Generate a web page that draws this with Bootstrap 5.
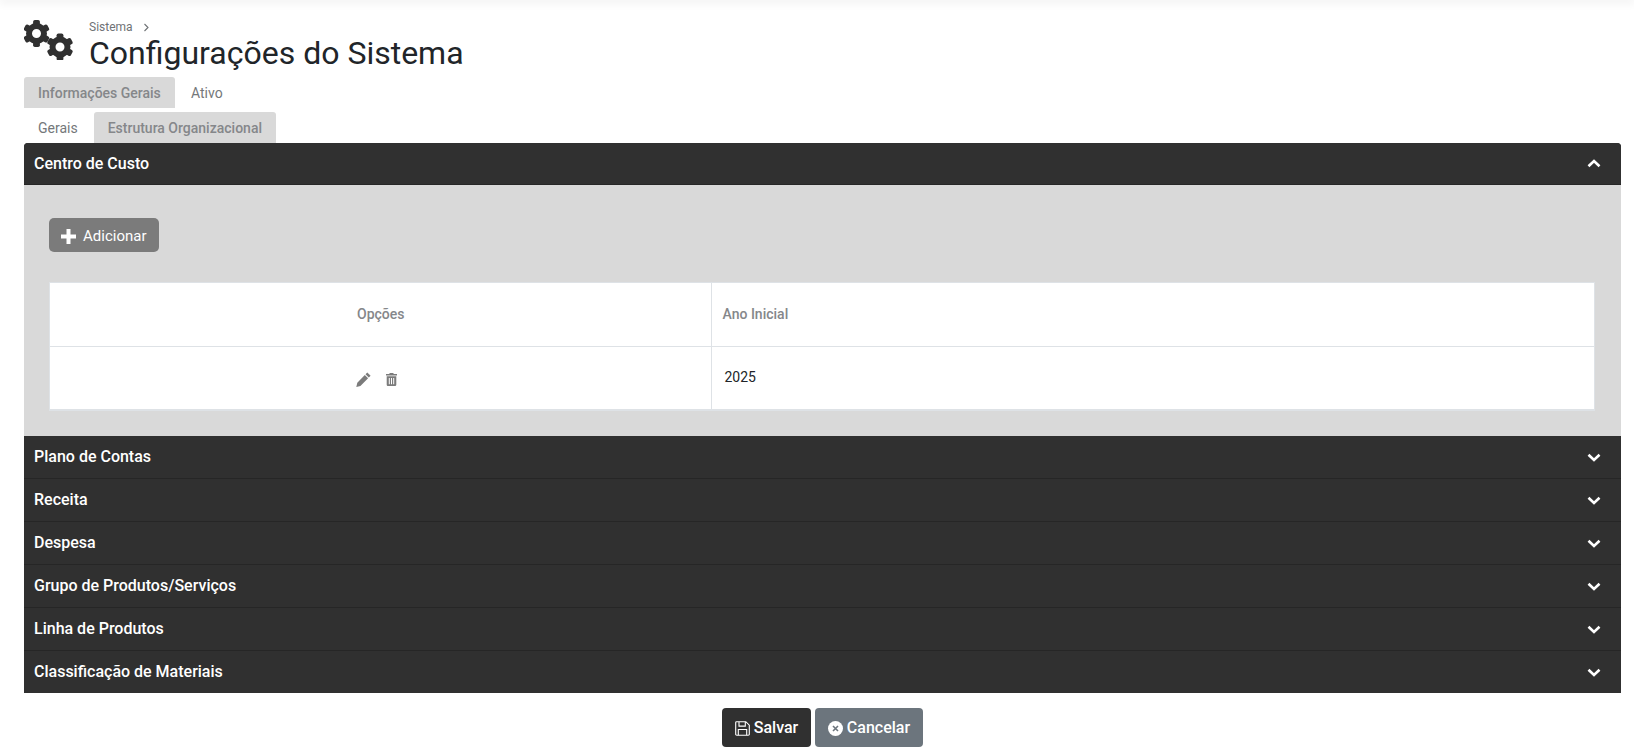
<!DOCTYPE html>
<html lang="pt-BR">
<head>
<meta charset="utf-8">
<title>Configurações do Sistema</title>
<link href="https://cdn.jsdelivr.net/npm/bootstrap@5.3.0/dist/css/bootstrap.min.css" rel="stylesheet">
<style>
html,body{height:100%;overflow:hidden}
body{font-family:Roboto,"Liberation Sans",sans-serif;background:#fff;color:#212529;font-size:14px}
.top-shade{height:0;box-shadow:0 0 10px 1px rgba(0,0,0,.2);margin-bottom:20px;background:#fff}
.page-wrap{padding:0 13px 0 24px}
.head-row{height:57px}
.gears{width:50px;height:40px;margin-right:15px;flex:none}
.crumb{font-size:12px;line-height:14px;color:#6f7275;height:14px}
.crumb svg{margin-left:7px;vertical-align:-1px}
.page-title{font-size:32px;font-weight:400;line-height:38px;margin:0;color:#212529}
.tabs-a,.tabs-b{border:0;flex-wrap:nowrap}
.tabs-a{height:31px;margin-bottom:4px}
.tabs-b{height:31px}
.tabs-a .nav-link,.tabs-b .nav-link{border:0;border-radius:3px 3px 0 0;padding:0 14px;height:31px;line-height:33px;font-size:14px;color:#74777a;margin:0;background:transparent;white-space:nowrap}
.tabs-a .nav-link:not(.active){padding-left:16px}
.tabs-a .nav-link.active,.tabs-b .nav-link.active{background:#d9d9d9;color:#85878a;font-weight:500}
.tabs-a .nav-link.active{width:151px}
.tabs-b .nav-link.active{width:182px;margin-left:2px}
.acc{--bs-accordion-border-width:0;--bs-accordion-border-radius:0}
.acc .accordion-item{background:#303030;border:0;border-radius:0}
.acc .accordion-item:first-child{border-radius:4px 4px 0 0}
.acc .accordion-item:first-child .accordion-button{border-radius:4px 4px 0 0;height:42px}
.acc .accordion-button{background:#303030;color:#fff;font-weight:500;font-size:16px;height:43px;padding:0 20px 0 10px;box-shadow:none;border-radius:0;border-bottom:1px solid #262626}
.acc .accordion-item:last-child .accordion-button{border-bottom:0;height:42px}
.acc .accordion-button::after{display:none}
.acc .accordion-button svg{margin-left:auto;flex:none}
.acc-body{background:#d9d9d9;height:251px;padding:33px 25px 0}
.btn-add{background:#7b7b7b;border:0;color:#fff;height:34px;width:110px;padding:3px 0 0 12px;display:flex;align-items:center;gap:7px;font-size:15px;border-radius:5px}
.btn-add:hover{background:#7b7b7b;color:#fff}
.tbl-wrap{margin-top:30px;width:1546px;border:1px solid #dee2e6;border-bottom-width:2px;background:#fff}
.tbl-wrap table{margin:0;table-layout:fixed;width:100%;--bs-table-bg:#fff}
.tbl-wrap th,.tbl-wrap td{height:63px;vertical-align:middle;font-size:14px;border-color:#dee2e6;padding:0 11px 0 12px}
.tbl-wrap th:not(.col-opt){padding-left:11px}
.tbl-wrap td{padding-left:13px}
.tbl-wrap th{color:#85878a;font-weight:500}
.tbl-wrap td{color:#212529;border-bottom:0;font-weight:400}
.tbl-wrap .col-opt{width:661px;text-align:center;border-right:1px solid #dee2e6}
.opt-icons{margin-right:9px;display:inline-flex;align-items:center;gap:15px;padding-top:10px}
.foot-row{margin-top:15px;gap:4px}
.foot-row .btn{height:39px;font-size:16px;font-weight:500;color:#fff;display:flex;align-items:center;border:0;padding:1px 0 0;border-radius:4px;justify-content:center;gap:4px}
.btn-save{width:89px;background:#303030}
.btn-save:hover{background:#303030}
.btn-cancel{width:108px;background:#6c757d}
.btn-cancel:hover{background:#6c757d}
</style>
</head>
<body>
<div class="top-shade"></div>
<div class="page-wrap">
  <div class="d-flex head-row">
    <svg class="gears" viewBox="0 0 50 40" aria-hidden="true">
      <defs>
        <g id="cog">
          <circle r="7.500" fill="none" stroke="#303030" stroke-width="6"/>
          <g fill="#303030">
            <rect x="-3.400" y="-13.500" width="6.800" height="5.500" rx="1.800"/>
            <rect x="-3.400" y="-13.500" width="6.800" height="5.500" rx="1.800" transform="rotate(60)"/>
            <rect x="-3.400" y="-13.500" width="6.800" height="5.500" rx="1.800" transform="rotate(120)"/>
            <rect x="-3.400" y="-13.500" width="6.800" height="5.500" rx="1.800" transform="rotate(180)"/>
            <rect x="-3.400" y="-13.500" width="6.800" height="5.500" rx="1.800" transform="rotate(240)"/>
            <rect x="-3.400" y="-13.500" width="6.800" height="5.500" rx="1.800" transform="rotate(300)"/>
          </g>
        </g>
      </defs>
      <use href="#cog" x="12.500" y="13.500"/>
      <use href="#cog" x="36" y="27"/>
    </svg>
    <div>
      <div class="crumb">Sistema <svg width="7" height="9" viewBox="0 0 7 9"><path d="M1.500 1l3.500 3.500L1.500 8" fill="none" stroke="#6f7275" stroke-width="1.100"/></svg></div>
      <h1 class="page-title">Configurações do Sistema</h1>
    </div>
  </div>
  <ul class="nav nav-tabs tabs-a">
    <li class="nav-item"><a class="nav-link active" href="#">Informações Gerais</a></li>
    <li class="nav-item"><a class="nav-link" href="#">Ativo</a></li>
  </ul>
  <ul class="nav nav-tabs tabs-b">
    <li class="nav-item"><a class="nav-link" href="#">Gerais</a></li>
    <li class="nav-item"><a class="nav-link active" href="#">Estrutura Organizacional</a></li>
  </ul>
  <div class="accordion acc">
    <div class="accordion-item">
      <button class="accordion-button" type="button">Centro de Custo
        <svg width="14" height="9" viewBox="0 0 14 9"><path d="M1.500 7.300L7 2l5.500 5.300" fill="none" stroke="#fff" stroke-width="2.600"/></svg>
      </button>
      <div class="acc-body">
        <button class="btn btn-add" type="button"><svg width="15" height="15" viewBox="0 0 15 15"><path d="M5.500 0h4v5.500H15v4H9.500V15h-4V9.500H0v-4h5.500z" fill="#fff"/></svg>Adicionar</button>
        <div class="tbl-wrap">
          <table class="table">
            <thead><tr><th class="col-opt">Opções</th><th>Ano Inicial</th></tr></thead>
            <tbody><tr>
              <td class="col-opt"><span class="opt-icons">
                <svg width="15" height="15" viewBox="0 0 15 15"><path d="M11.300.4l3.300 3.300-1.800 1.800-3.300-3.300zM8.800 3l3.300 3.300-7.700 7.700-4.100 1 1-4.300z" fill="#7b7b7b"/></svg>
                <svg width="11" height="13" viewBox="0 0 11 13"><path fill-rule="evenodd" d="M3.800 0h3.400l.6 1H11v1.500H0V1h3.200zM.7 3.300h9.600v8.500a1.200 1.200 0 0 1-1.200 1.200H1.900a1.200 1.200 0 0 1-1.200-1.200zM2.800 5v6.300h1V5zM5 5v6.300h1V5zM7.200 5v6.300h1V5z" fill="#7b7b7b"/></svg>
              </span></td>
              <td>2025</td>
            </tr></tbody>
          </table>
        </div>
      </div>
    </div>
    <div class="accordion-item"><button class="accordion-button collapsed" type="button">Plano de Contas<svg width="14" height="9" viewBox="0 0 14 9"><path d="M1.500 1.700L7 7l5.500-5.300" fill="none" stroke="#fff" stroke-width="2.600"/></svg></button></div>
    <div class="accordion-item"><button class="accordion-button collapsed" type="button">Receita<svg width="14" height="9" viewBox="0 0 14 9"><path d="M1.500 1.700L7 7l5.500-5.300" fill="none" stroke="#fff" stroke-width="2.600"/></svg></button></div>
    <div class="accordion-item"><button class="accordion-button collapsed" type="button">Despesa<svg width="14" height="9" viewBox="0 0 14 9"><path d="M1.500 1.700L7 7l5.500-5.300" fill="none" stroke="#fff" stroke-width="2.600"/></svg></button></div>
    <div class="accordion-item"><button class="accordion-button collapsed" type="button">Grupo de Produtos/Serviços<svg width="14" height="9" viewBox="0 0 14 9"><path d="M1.500 1.700L7 7l5.500-5.300" fill="none" stroke="#fff" stroke-width="2.600"/></svg></button></div>
    <div class="accordion-item"><button class="accordion-button collapsed" type="button">Linha de Produtos<svg width="14" height="9" viewBox="0 0 14 9"><path d="M1.500 1.700L7 7l5.500-5.300" fill="none" stroke="#fff" stroke-width="2.600"/></svg></button></div>
    <div class="accordion-item"><button class="accordion-button collapsed" type="button">Classificação de Materiais<svg width="14" height="9" viewBox="0 0 14 9"><path d="M1.500 1.700L7 7l5.500-5.300" fill="none" stroke="#fff" stroke-width="2.600"/></svg></button></div>
  </div>
  <div class="d-flex justify-content-center foot-row">
    <button class="btn btn-save" type="button"><svg width="15" height="15" viewBox="0 0 15 15"><path d="M1.500.7h9.300l3.500 3.500v9a1.100 1.100 0 0 1-1.100 1.100H1.800a1.100 1.100 0 0 1-1.100-1.100V1.500a.8.8 0 0 1 .8-.8zM4 .9v4.200h6.300V.9M3.300 14V8.500h8.400V14" fill="none" stroke="#fff" stroke-width="1.100"/></svg>Salvar</button>
    <button class="btn btn-cancel" type="button"><svg width="15" height="15" viewBox="0 0 15 15"><circle cx="7.500" cy="7.500" r="7.500" fill="#fff"/><path d="M5 5l5 5M10 5l-5 5" stroke="#6c757d" stroke-width="1.600"/></svg>Cancelar</button>
  </div>
</div>
<script src="https://cdn.jsdelivr.net/npm/bootstrap@5.3.0/dist/js/bootstrap.bundle.min.js"></script>
</body>
</html>
